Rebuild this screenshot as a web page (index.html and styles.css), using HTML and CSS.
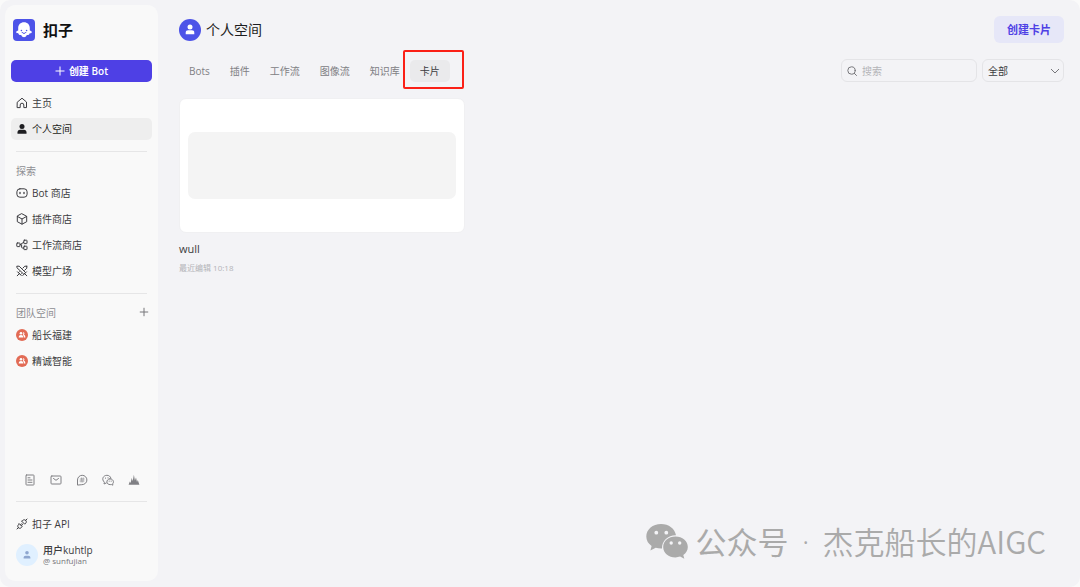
FILE: index.html
```html
<!DOCTYPE html>
<html lang="zh-CN">
<head>
<meta charset="utf-8">
<meta name="viewport" content="width=device-width, initial-scale=1">
<title>扣子 - 个人空间</title>
<link rel="stylesheet" href="styles.css">
</head>
<body>
<div class="app">
  <aside class="sidebar">
    <a class="brand" href="#">
      <svg class="brand-logo" viewBox="0 0 22 22" aria-hidden="true">
        <rect width="22" height="22" rx="4" fill="#4d53e8"/>
        <path d="M11 3.200c-3.400 0-5.800 2.400-5.800 5.800v2.600c-.8.2-2 .7-2 1.700 0 .9 1.200 1.100 2.300 1.100.3 1.300 1.500 1.900 2.700 1.500.6 1.300 1.700 2.300 2.800 2.300s2.200-1 2.800-2.300c1.200.4 2.400-.2 2.700-1.500 1.100 0 2.300-.2 2.300-1.100 0-1-1.200-1.500-2-1.700V9c0-3.400-2.400-5.800-5.800-5.800z" fill="#fff"/>
        <circle cx="8.400" cy="11.500" r=".8" fill="#4d53e8"/>
        <circle cx="13.600" cy="11.500" r=".8" fill="#4d53e8"/>
        <path d="M9 13.300c1 1.600 3 1.600 4 0" fill="none" stroke="#4d53e8" stroke-width="1" stroke-linecap="round"/>
      </svg>
      <span>扣子</span>
    </a>
    <button class="create-bot" type="button">
      <svg class="plus" viewBox="0 0 10 10" aria-hidden="true"><path d="M5 .5v9M.5 5h9"/></svg>
      <span>创建 Bot</span>
    </button>
    <nav class="nav">
      <a class="nav-item" href="#">
        <svg class="icon" viewBox="0 0 12 12"><path d="M1.500 5 6 1.200 10.500 5v5.600H7.800V8a1.800 1.800 0 0 0-3.600 0v2.600H1.500z"/></svg>
        <span>主页</span>
      </a>
      <a class="nav-item active" href="#" aria-current="page">
        <svg class="icon solid" viewBox="0 0 12 12"><circle cx="6" cy="3.600" r="2.500"/><path d="M1.500 10.800V9.300c0-1.600 1-2.500 2.500-2.500h4c1.500 0 2.500.9 2.500 2.500v1.500z"/></svg>
        <span>个人空间</span>
      </a>
    </nav>
    <hr class="divider">
    <h2 class="section-title">探索</h2>
    <nav class="nav">
      <a class="nav-item" href="#">
        <svg class="icon" viewBox="0 0 12 12"><rect x=".9" y="1.800" width="10.200" height="8.400" rx="3"/><path d="M4 5.300v1.200M8 5.300v1.200" stroke-width="1.300"/></svg>
        <span>Bot 商店</span>
      </a>
      <a class="nav-item" href="#">
        <svg class="icon" viewBox="0 0 12 12"><path d="M6 .8 10.700 3.300v5.400L6 11.200 1.300 8.700V3.300zM1.500 3.500 6 6l4.500-2.500M6 6v5"/></svg>
        <span>插件商店</span>
      </a>
      <a class="nav-item" href="#">
        <svg class="icon" viewBox="0 0 12 12"><rect x=".8" y="4" width="3.200" height="3.600" rx=".5"/><rect x="7.800" y="1.200" width="3.200" height="3.400" rx=".5"/><rect x="7.800" y="7.200" width="3.200" height="3.400" rx=".5"/><path d="M4 5.800l3.800-2.600M5.600 5.800v2.400c0 .6.300.8.800.8h1.400"/></svg>
        <span>工作流商店</span>
      </a>
      <a class="nav-item" href="#">
        <svg class="icon" viewBox="0 0 12 12"><path d="M1.200 1.200h2l6.300 6.300-1.700 1.700L1.200 3zM10.800 1.200h-2L6.900 3.100M10.800 1.200v2L8.700 5.300M3.300 6.700 2.500 7.500l2 2 .9-.8M1.500 6.800l3.700 3.700M10.500 6.800l-3.700 3.700M3.200 8.800l-2 2M8.800 8.800l2 2"/></svg>
        <span>模型广场</span>
      </a>
    </nav>
    <hr class="divider">
    <div class="section-head">
      <h2 class="section-title">团队空间</h2>
      <button class="add-team" type="button" aria-label="添加团队"><svg class="plus" viewBox="0 0 10 10"><path d="M5 .8v8.400M.8 5h8.400"/></svg></button>
    </div>
    <nav class="nav">
      <a class="nav-item" href="#">
        <svg class="team" viewBox="0 0 12 12"><circle cx="6" cy="6" r="6" fill="#e26b55"/><circle cx="5" cy="4.300" r="1.300" fill="#fff"/><path d="M2.700 8.400c0-1.700.9-2.500 2.300-2.500s2.300.8 2.300 2.500zM6.800 3.200c1.800-.2 2.200 1.700 1 2.400 1.100.5 1.600 1.500 1.600 2.800H7.900c0-1-.2-1.800-1-2.500.6-.8.6-1.900-.1-2.700z" fill="#fff"/></svg>
        <span>船长福建</span>
      </a>
      <a class="nav-item" href="#">
        <svg class="team" viewBox="0 0 12 12"><circle cx="6" cy="6" r="6" fill="#e26b55"/><circle cx="5" cy="4.300" r="1.300" fill="#fff"/><path d="M2.700 8.400c0-1.700.9-2.500 2.300-2.500s2.300.8 2.300 2.500zM6.800 3.200c1.800-.2 2.200 1.700 1 2.400 1.100.5 1.600 1.500 1.600 2.800H7.900c0-1-.2-1.800-1-2.500.6-.8.6-1.900-.1-2.700z" fill="#fff"/></svg>
        <span>精诚智能</span>
      </a>
    </nav>
    <div class="sidebar-foot">
      <div class="links">
        <a href="#" aria-label="文档"><svg class="icon muted" viewBox="0 0 12 12"><rect x="2" y="1" width="8" height="10" rx=".6"/><path d="M4 3.800h2M4 6h4M4 8.300h4"/></svg></a>
        <a href="#" aria-label="邮件"><svg class="icon muted" viewBox="0 0 12 12"><rect x="1" y="2" width="10" height="8" rx=".8"/><path d="M3.500 4.500 6 6.300l2.500-1.800"/></svg></a>
        <a href="#" aria-label="社区"><svg class="icon muted" viewBox="0 0 12 12"><path d="M1.500 10.700V6A4.700 4.700 0 1 1 6.200 10.700z"/><path d="M4.200 5h4M4 7h4M5.500 3.900l-.4 4.200M7.200 3.900l-.4 4.200" stroke-width=".6"/></svg></a>
        <a href="#" aria-label="微信"><svg class="icon muted" viewBox="0 0 12 12"><path d="M4.300 9 2 10l.4-1.800C-.9 5.300 1.300 1.300 4.900 1.300c2 0 3.500 1 4 2.800"/><path d="M8 4.800c-4.300.2-4.200 5.800.2 5.800h1.400l1.200.6-.1-1.400C12.400 7.800 11.100 4.900 8 4.800z"/><path d="M3.500 3.900v.5M6 3.600v.5M7.200 7v.4M9.200 7v.4" stroke-width=".8"/></svg></a>
        <a href="#" aria-label="数据"><svg class="icon muted solid" viewBox="0 0 12 12"><path d="M.6 10.800 1.800 7.500l.8 1.600L3.700 4l1 3L5.900.8l1 5.700 1.100-3L9 8l.8-2 1.600 4.800z"/></svg></a>
      </div>
      <hr class="divider">
      <a class="nav-item" href="#">
        <svg class="icon" viewBox="0 0 12 12"><path d="M9.600 2.400 11 1M2.400 9.600 1 11M5.800 3.300l2.900 2.900 1-1c1.900-2-.9-4.800-2.900-2.900zM3.300 5.800l2.900 2.900-1 1c-2 1.900-4.800-.9-2.900-2.900zM4.500 6.800l1.200-1.200M5.400 7.700l1.200-1.200"/></svg>
        <span>扣子 API</span>
      </a>
      <a class="user" href="#">
        <svg class="user-avatar" viewBox="0 0 22 22"><circle cx="11" cy="11" r="11" fill="#e0f0ff"/><circle cx="11" cy="8.800" r="1.800" fill="#8ea6cf"/><path d="M7.600 14.500v-.8c0-1.300.8-2 2-2h2.800c1.200 0 2 .7 2 2v.8z" fill="#8ea6cf"/></svg>
        <span class="user-text"><span class="user-name">用户kuhtlp</span><span class="user-id">@ sunfujian</span></span>
      </a>
    </div>
  </aside>
  <main class="main">
    <header class="page-head">
      <svg class="space-avatar" viewBox="0 0 22 22" aria-hidden="true"><circle cx="11" cy="11" r="11" fill="#4d53e8"/><circle cx="11" cy="8" r="2.500" fill="#fff"/><path d="M6.700 15.200v-1.500c0-1.600 1-2.400 2.400-2.400h3.800c1.400 0 2.400.8 2.400 2.400v1.500z" fill="#fff"/></svg>
      <h1>个人空间</h1>
      <button class="create-card" type="button">创建卡片</button>
    </header>
    <div class="toolbar">
      <div class="tabs" role="tablist">
        <button class="tab" role="tab" type="button">Bots</button>
        <button class="tab" role="tab" type="button">插件</button>
        <button class="tab" role="tab" type="button">工作流</button>
        <button class="tab" role="tab" type="button">图像流</button>
        <button class="tab" role="tab" type="button">知识库</button>
        <button class="tab selected" role="tab" type="button" aria-selected="true">卡片<span class="highlight"></span></button>
      </div>
      <label class="search">
        <svg class="search-icon" viewBox="0 0 10 10" aria-hidden="true"><circle cx="4.500" cy="4.500" r="3.700"/><path d="m7.300 7.300 2.200 2.200"/></svg>
        <input type="search" placeholder="搜索" aria-label="搜索">
      </label>
      <div class="filter">
        <select aria-label="筛选"><option>全部</option></select>
        <svg class="chevron" viewBox="0 0 10 10" aria-hidden="true"><path d="m1 3 4 4 4-4"/></svg>
      </div>
    </div>
    <section class="cards">
      <article class="card">
        <div class="preview"><div class="preview-inner"></div></div>
        <h3>wull</h3>
        <p>最近编辑 10:18</p>
      </article>
    </section>
  </main>
  <div class="watermark">
    <svg class="wechat" viewBox="0 0 42 36" aria-hidden="true">
      <path d="M15 1C6.800 1 .3 6.500.3 13.400c0 4 2 7.200 5.300 9.500L4.400 27.500l5.300-2.700c2 .6 4 .9 6.300.8C15.600 17.500 22.500 12 30 12.300 29 5.700 22.800 1 15 1z"/>
      <path d="M29.500 13.400c-7 0-12.300 4.600-12.300 10.500s5.400 10.500 12.300 10.500c1.600 0 3.200-.3 4.600-.8l4.200 2.100-1-3.700c2.700-1.900 4.500-4.800 4.500-8.100 0-5.900-5.400-10.500-12.300-10.500z"/>
      <g fill="#f3f3f6"><circle cx="10.300" cy="9.700" r="1.900"/><circle cx="20.300" cy="9.700" r="1.900"/><circle cx="25.200" cy="20" r="1.700"/><circle cx="33.700" cy="20" r="1.700"/></g>
    </svg>
    <span class="account">公众号</span><span class="dot">·</span><span>杰克船长的AIGC</span>
  </div>
</div>
</body>
</html>
```
FILE: styles.css
```css
* { box-sizing: border-box; }
body {
  margin: 0;
  background: #fafafa;
  color: #3c3c40;
  font: 10px/14px "Open Sans", "Noto Sans CJK SC", sans-serif;
}
a { color: inherit; text-decoration: none; }
button, input, select { font: inherit; color: inherit; border: 0; background: none; padding: 0; margin: 0; }
button { cursor: pointer; }
h1, h2, h3, p { margin: 0; font-weight: 400; }
svg { display: block; flex: none; }

.app {
  position: relative;
  display: flex;
  min-height: 100vh;
  padding: 5px;
  padding-bottom: 6px;
  background: #f3f3f6;
  border-radius: 10px;
}

.sidebar {
  display: flex;
  flex-direction: column;
  flex: none;
  width: 153px;
  padding: 14px 6px 15px;
  background: #f9f9f9;
  border-radius: 10px;
}
.brand {
  display: flex;
  align-items: center;
  gap: 8px;
  padding-left: 2px;
  margin-bottom: 19px;
  font-size: 15px;
  line-height: 22px;
  font-weight: 700;
  color: #111;
}
.brand-logo, .space-avatar, .user-avatar { width: 22px; height: 22px; }
.create-bot {
  display: flex;
  align-items: center;
  justify-content: center;
  gap: 4px;
  height: 22px;
  margin-bottom: 10px;
  border-radius: 5px;
  background: #4e40e5;
  color: #fff;
  font-weight: 600;
}
.plus { width: 10px; height: 10px; fill: none; stroke: currentColor; }
.nav { display: flex; flex-direction: column; gap: 4px; }
.nav-item {
  display: flex;
  align-items: center;
  gap: 4px;
  height: 22px;
  padding: 0 5px;
  border-radius: 5px;
}
.nav-item.active { background: #eee; color: #1d1d20; }
.icon { width: 12px; height: 12px; fill: none; stroke: currentColor; stroke-linejoin: round; stroke-linecap: round; }
.icon.solid { fill: currentColor; stroke: none; }
.icon.muted { color: #808084; }
.team { width: 12px; height: 12px; }
.divider { width: auto; height: 1px; margin: 11px 5px 12px; border: 0; background: #e6e6e7; align-self: stretch; }
.section-title { padding: 0 5px; margin-bottom: 4px; font-size: 10px; line-height: 14px; color: #8e8e93; }
.section-head { display: flex; justify-content: space-between; align-items: flex-start; }
.add-team { padding: 1px 3px; color: #77777b; }
.sidebar-foot { display: flex; flex-direction: column; margin-top: auto; }
.links { display: flex; gap: 14px; padding: 0 13px; margin-bottom: 4px; }
.sidebar-foot .divider { margin-bottom: 11px; }
.user { display: flex; align-items: center; gap: 5px; padding-left: 5px; margin-top: 9px; height: 22px; }
.user-text { display: flex; flex-direction: column; }
.user-name { line-height: 12px; font-weight: 500; }
.user-id { font-size: 8px; line-height: 10px; color: #77777b; }

.main { flex: 1; min-width: 0; padding: 11px 11px 0 21px; }
.page-head { display: flex; align-items: center; gap: 5px; margin-bottom: 16px; }
.page-head h1 { font-size: 14px; line-height: 22px; color: #1d1d20; }
.create-card {
  height: 27px;
  margin-left: auto;
  padding: 0 13px;
  border-radius: 6px;
  background: #e6e7f8;
  color: #4e40e5;
  font-size: 11px;
  font-weight: 700;
}
.toolbar { display: flex; align-items: center; gap: 5px; margin-bottom: 16px; }
.tabs { display: flex; margin-right: auto; }
.tab { position: relative; height: 22px; padding: 0 10px; border-radius: 5px; color: #808084; }
.tab.selected { background: #eaeaec; color: #3c3c40; }
.highlight { position: absolute; inset: -10px -14px -7px -7px; border: 2px solid #fb2017; border-radius: 2px; }
.search, .filter { display: flex; align-items: center; height: 23px; border: 1px solid #e4e4e7; border-radius: 6px; }
.search { width: 136px; padding: 0 5px; gap: 5px; }
.search-icon { width: 10px; height: 10px; fill: none; stroke: #77777b; stroke-linecap: round; }
.search input { flex: 1; min-width: 0; outline: 0; appearance: none; }
.search input::placeholder { color: #b4b4b8; opacity: 1; }
.filter { position: relative; width: 82px; }
.filter select { flex: 1; height: 100%; padding: 0 5px; appearance: none; }
.chevron { position: absolute; right: 3px; width: 10px; height: 10px; fill: none; stroke: #77777b; pointer-events: none; }

.cards { display: grid; grid-template-columns: repeat(auto-fill, minmax(260px, 1fr)); gap: 14px; }
.preview { padding: 33px 8px; border: 1px solid #f0f0f2; border-radius: 7px; background: #fff; }
.preview-inner { height: 67px; border-radius: 7px; background: #f4f4f4; }
.card h3 { margin-top: 8px; font-size: 11px; line-height: 16px; font-weight: 500; }
.card p { margin-top: 5px; font-size: 8px; line-height: 12px; color: #b4b4b8; }

.watermark {
  position: absolute;
  right: 34px;
  bottom: 24px;
  display: flex;
  align-items: center;
  color: #aaa;
  font: 350 31px/44px "Noto Sans CJK SC", sans-serif;
  pointer-events: none;
}
.watermark .account { font-weight: 400; }
.watermark .dot { width: 34px; text-align: center; font-family: "Open Sans", sans-serif; }
.wechat { width: 42px; height: 36px; margin-right: 8px; fill: #aaa; }
```
